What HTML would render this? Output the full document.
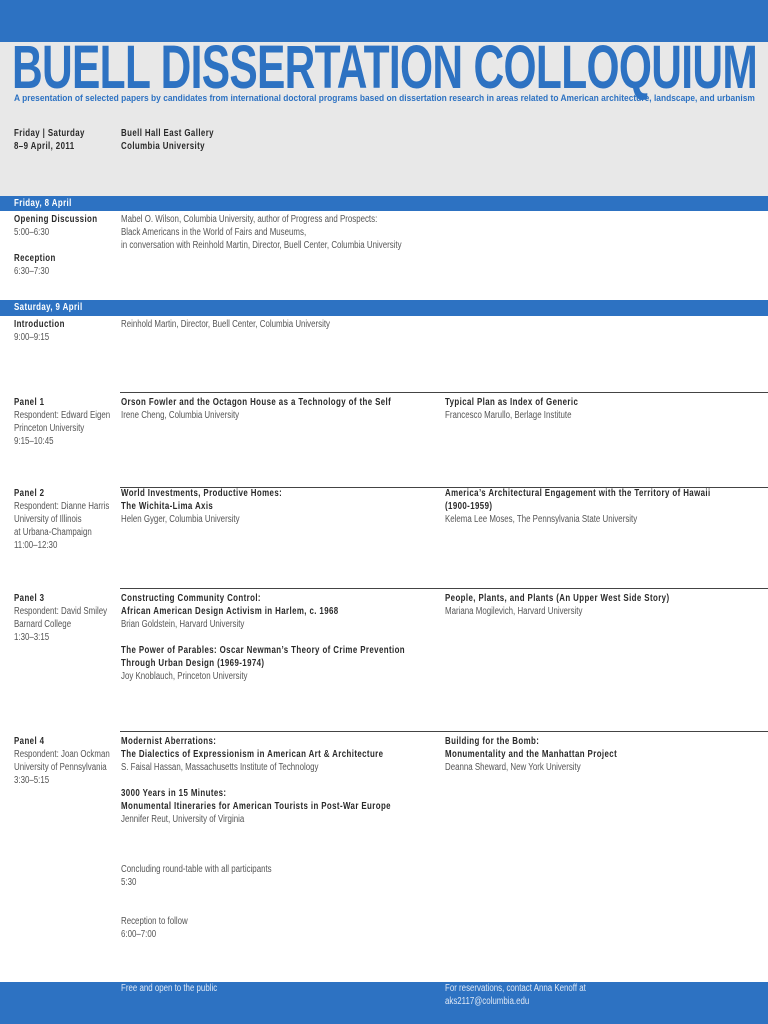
<!DOCTYPE html>
<html><head><meta charset="utf-8"><style>
body{margin:0;width:768px;height:1024px;position:relative;background:#fff;font-family:"Liberation Sans",sans-serif;color:#555;overflow:hidden}
.a{position:absolute;font-size:10px;line-height:13px;white-space:nowrap;transform:scaleX(.79);transform-origin:left top}
b{color:#2a2a2a;font-weight:bold;letter-spacing:.5px}
.bar{position:absolute;left:0;width:768px;background:#2d72c2}
.ln{position:absolute;left:120px;width:648px;height:1px;background:#444}
</style></head><body>
<div class="bar" style="top:0;height:42px"></div>
<div style="position:absolute;top:42px;left:0;width:768px;height:154px;background:#e8e8e8"></div>
<div style="position:absolute;left:12px;top:32px;font-size:61px;font-weight:bold;color:#2d72c2;white-space:nowrap;transform:scaleX(0.697);transform-origin:left top;letter-spacing:-1px">BUELL DISSERTATION COLLOQUIUM</div>
<div class="a" style="left:14px;top:92px;color:#2d72c2;font-weight:bold;font-size:9.5px;transform:scaleX(.885)">A presentation of selected papers by candidates from international doctoral programs based on dissertation research in areas related to American architecture, landscape, and urbanism</div>
<div class="a" style="left:14px;top:127px"><b>Friday | Saturday<br>8–9 April, 2011</b></div>
<div class="a" style="left:121px;top:127px"><b>Buell Hall East Gallery<br>Columbia University</b></div>

<div class="bar" style="top:196px;height:15px"></div>
<div class="a" style="left:14px;top:197px;color:#fff;font-weight:bold;letter-spacing:.5px">Friday, 8 April</div>
<div class="a" style="left:14px;top:213px"><b>Opening Discussion</b><br>5:00–6:30</div>
<div class="a" style="left:121px;top:213px">Mabel O. Wilson, Columbia University, author of Progress and Prospects:<br>Black Americans in the World of Fairs and Museums,<br>in conversation with Reinhold Martin, Director, Buell Center, Columbia University</div>
<div class="a" style="left:14px;top:252px"><b>Reception</b><br>6:30–7:30</div>

<div class="bar" style="top:300px;height:16px"></div>
<div class="a" style="left:14px;top:301px;color:#fff;font-weight:bold;letter-spacing:.5px">Saturday, 9 April</div>
<div class="a" style="left:14px;top:318px"><b>Introduction</b><br>9:00–9:15</div>
<div class="a" style="left:121px;top:318px">Reinhold Martin, Director, Buell Center, Columbia University</div>

<div class="ln" style="top:392px"></div>
<div class="a" style="left:14px;top:396px"><b>Panel 1</b><br>Respondent: Edward Eigen<br>Princeton University<br>9:15–10:45</div>
<div class="a" style="left:121px;top:396px"><b>Orson Fowler and the Octagon House as a Technology of the Self</b><br>Irene Cheng, Columbia University</div>
<div class="a" style="left:445px;top:396px"><b>Typical Plan as Index of Generic</b><br>Francesco Marullo, Berlage Institute</div>

<div class="ln" style="top:487px"></div>
<div class="a" style="left:14px;top:487px"><b>Panel 2</b><br>Respondent: Dianne Harris<br>University of Illinois<br>at Urbana-Champaign<br>11:00–12:30</div>
<div class="a" style="left:121px;top:487px"><b>World Investments, Productive Homes:<br>The Wichita-Lima Axis</b><br>Helen Gyger, Columbia University</div>
<div class="a" style="left:445px;top:487px"><b>America’s Architectural Engagement with the Territory of Hawaii<br>(1900-1959)</b><br>Kelema Lee Moses, The Pennsylvania State University</div>

<div class="ln" style="top:588px"></div>
<div class="a" style="left:14px;top:592px"><b>Panel 3</b><br>Respondent: David Smiley<br>Barnard College<br>1:30–3:15</div>
<div class="a" style="left:121px;top:592px"><b>Constructing Community Control:<br>African American Design Activism in Harlem, c. 1968</b><br>Brian Goldstein, Harvard University</div>
<div class="a" style="left:121px;top:644px"><b>The Power of Parables: Oscar Newman’s Theory of Crime Prevention<br>Through Urban Design (1969-1974)</b><br>Joy Knoblauch, Princeton University</div>
<div class="a" style="left:445px;top:592px"><b>People, Plants, and Plants (An Upper West Side Story)</b><br>Mariana Mogilevich, Harvard University</div>

<div class="ln" style="top:731px"></div>
<div class="a" style="left:14px;top:735px"><b>Panel 4</b><br>Respondent: Joan Ockman<br>University of Pennsylvania<br>3:30–5:15</div>
<div class="a" style="left:121px;top:735px"><b>Modernist Aberrations:<br>The Dialectics of Expressionism in American Art &amp; Architecture</b><br>S. Faisal Hassan, Massachusetts Institute of Technology</div>
<div class="a" style="left:121px;top:787px"><b>3000 Years in 15 Minutes:<br>Monumental Itineraries for American Tourists in Post-War Europe</b><br>Jennifer Reut, University of Virginia</div>
<div class="a" style="left:445px;top:735px"><b>Building for the Bomb:<br>Monumentality and the Manhattan Project</b><br>Deanna Sheward, New York University</div>

<div class="a" style="left:121px;top:863px">Concluding round-table with all participants<br>5:30</div>
<div class="a" style="left:121px;top:915px">Reception to follow<br>6:00–7:00</div>

<div class="bar" style="top:982px;height:42px"></div>
<div class="a" style="left:121px;top:982px;color:#dfe8f5">Free and open to the public</div>
<div class="a" style="left:445px;top:982px;color:#dfe8f5">For reservations, contact Anna Kenoff at<br>aks2117@columbia.edu</div>
</body></html>
